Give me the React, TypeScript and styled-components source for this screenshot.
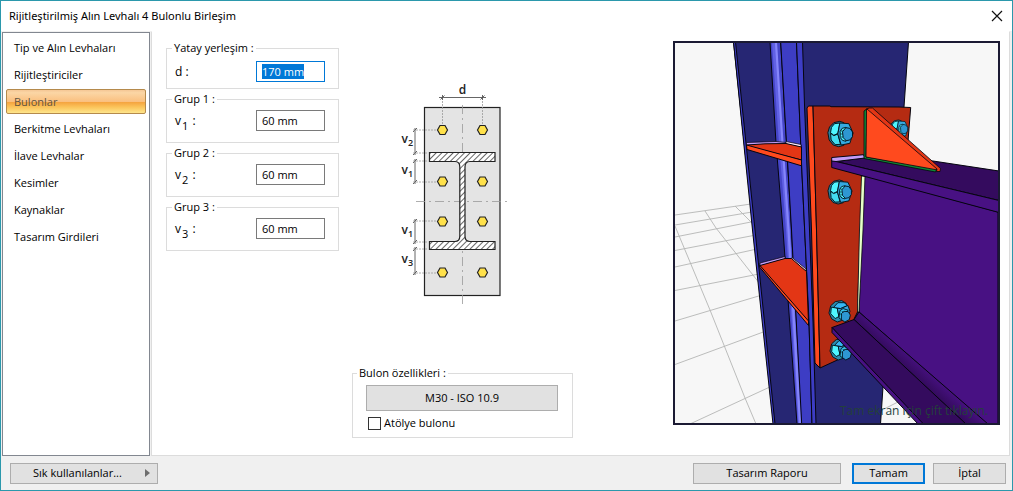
import React, { useEffect, useRef } from "react";
import styled, { createGlobalStyle } from "styled-components";

const GlobalStyle = createGlobalStyle`
  * { box-sizing: border-box; }
  body {
    margin: 0;
    background: #fff;
    color: #000;
    font: 11px/14px "Open Sans", "Noto Sans", sans-serif;
  }
  button, input { font: inherit; color: inherit; }
  ::selection { background: #0078d7; color: #fff; }
`;

const Dialog = styled.main`
  display: flex;
  flex-direction: column;
  min-height: 100vh;
  border: 1px solid #2b98ac;
  background: #fff;
`;

const TitleBar = styled.header`
  display: flex;
  align-items: center;
  justify-content: space-between;
  height: 30px;
  padding: 0 7px 0 8px;
`;

const Title = styled.h1`
  margin: 0;
  font: 400 11px/16px "Noto Sans", sans-serif;
`;

const CloseButton = styled.button`
  display: flex;
  align-items: center;
  justify-content: center;
  width: 16px;
  height: 16px;
  padding: 0;
  border: 0;
  background: none;
`;

const Body = styled.div`
  display: flex;
  flex: 1;
  padding: 0 2px 0 1px;
  background: #f0f0f0;
`;

const Sidebar = styled.nav`
  display: flex;
  flex-direction: column;
  gap: 2px;
  width: 148px;
  margin-top: 1px;
  padding: 2px 3px;
  border: 1px solid #828790;
  background: #fff;
`;

const SidebarItem = styled.button<{ $active?: boolean }>`
  height: 25px;
  padding: 0 7px;
  border: 1px solid ${(p) => (p.$active ? "#b58a4c" : "transparent")};
  border-radius: 2px;
  background: ${(p) =>
    p.$active
      ? "linear-gradient(#f5c795 0%, #fbd6a5 12%, #fac080 50%, #f5a540 54%, #fbc55c 75%, #fee58c 100%)"
      : "none"};
  color: ${(p) => (p.$active ? "#5f5340" : "#000")};
  text-align: left;
`;

const Content = styled.section`
  display: grid;
  grid-template-columns: 173px 221px 1fr;
  column-gap: 13px;
  flex: 1;
  margin-left: 1px;
  padding: 9px 9px 16px 14px;
  border: 1px solid #dcdcdc;
  border-top-color: #fff;
  background: #fff;
`;

const Groups = styled.div`
  display: flex;
  flex-direction: column;
  gap: 3px;
`;

const Group = styled.fieldset<{ $compact?: boolean }>`
  height: ${(p) => (p.$compact ? 48 : 51)}px;
  min-width: 0;
  margin: 0;
  padding: ${(p) => (p.$compact ? 6 : 4)}px 13px 0 8px;
  border: 1px solid #dcdcdc;
`;

const Legend = styled.legend<{ $flush?: boolean }>`
  height: 14px;
  margin-left: ${(p) => (p.$flush ? -9 : -3)}px;
  padding: 0 2px;
`;

const Field = styled.div`
  display: flex;
  align-items: center;
  justify-content: space-between;
  height: 21px;
`;

const FieldLabel = styled.label`
  font-size: 12px;
  line-height: 20px;
`;

const Subscript = styled.sub`
  position: relative;
  top: 2px;
  margin: 0 1px;
  font-size: 11px;
  line-height: 0;
`;

const TextInput = styled.input`
  width: 69px;
  height: 21px;
  padding: 0 5px;
  border: 1px solid #7a7a7a;
  background: #fff;
  outline: none;
  &:focus { border-color: #0078d7; }
`;

const Middle = styled.div`
  display: flex;
  flex-direction: column;
  align-items: center;
  padding-top: 39px;
`;

const Drawing = styled.svg`
  display: block;
  width: 136px;
  height: 230px;
`;

const BoltGroup = styled.fieldset`
  align-self: stretch;
  min-width: 0;
  height: 72px;
  margin: 56px 0 0;
  padding: 5px 14px 0 13px;
  border: 1px solid #dcdcdc;
`;

const Button = styled.button<{ $width?: number; $primary?: boolean }>`
  display: flex;
  align-items: center;
  justify-content: center;
  width: ${(p) => (p.$width ? `${p.$width}px` : "100%")};
  height: ${(p) => (p.$width ? 21 : 26)}px;
  padding: 0;
  border: ${(p) => (p.$primary ? "2px solid #0078d7" : "1px solid #adadad")};
  background: #e1e1e1;
`;

const CheckLabel = styled.label`
  display: flex;
  align-items: center;
  gap: 3px;
  margin-top: 5px;
  padding-left: 2px;
`;

const CheckBox = styled.input`
  appearance: none;
  width: 13px;
  height: 13px;
  margin: 0;
  border: 1px solid #333;
  background: #fff;
`;

const Preview = styled.div`
  justify-self: end;
  align-self: start;
  width: 327px;
  border: 2px solid #1b1a33;
`;

const Scene = styled.svg`
  display: block;
  width: 100%;
  height: auto;
`;

const Footer = styled.footer`
  display: flex;
  align-items: center;
  gap: 11px;
  height: 34px;
  padding: 0 6px 0 9px;
  background: #f0f0f0;
`;

const MenuButton = styled(Button)`
  justify-content: space-between;
  margin-right: auto;
  padding: 0 7px 0 22px;
`;

const Actions = styled.div`
  display: flex;
  gap: 8px;
`;

const pages = [
  "Tip ve Alın Levhaları",
  "Rijitleştiriciler",
  "Bulonlar",
  "Berkitme Levhaları",
  "İlave Levhalar",
  "Kesimler",
  "Kaynaklar",
  "Tasarım Girdileri",
];

const hex = (x: number, y: number) =>
  `${x - 5},${y} ${x - 2.5},${y - 4.5} ${x + 2.5},${y - 4.5} ${x + 5},${y} ${x + 2.5},${y + 4.5} ${x - 2.5},${y + 4.5}`;

const dimensions = [
  { sub: "2", from: 130, to: 153, text: 143 },
  { sub: "1", from: 161, to: 182, text: 174 },
  { sub: "1", from: 221, to: 242, text: 234 },
  { sub: "3", from: 249, to: 273, text: 263 },
];

function PlateDrawing() {
  return (
    <Drawing viewBox="395 80 136 230" role="img" aria-label="Bulon yerleşimi">
      <defs>
        <pattern id="hatch" width="4" height="4" patternUnits="userSpaceOnUse" patternTransform="rotate(45)">
          <rect width="4" height="4" fill="#fff" />
          <path d="M0 0V4" stroke="#333" strokeWidth="1.5" />
        </pattern>
      </defs>
      <rect x="424.5" y="107.5" width="75.5" height="188" fill="#e4e4e4" stroke="#222" strokeWidth="1.2" />
      <path d="M462.5 105V306M416 201.5H510" stroke="#999" strokeWidth=".8" strokeDasharray="9 4 2 4" />
      <path
        d="M429.5 152.5H495V161.5H470Q465 161.5 465 167V236Q465 241.5 470 241.5H495V249.5H429.5V241.5H455Q459.8 241.5 459.8 236V167Q459.8 161.5 455 161.5H429.5Z"
        fill="url(#hatch)"
        stroke="#222"
        strokeWidth="1.2"
      />
      <path d="M439 97.5H486M442.5 95V100M482.5 95V100M440.5 99.5L444.5 95.5M480.5 99.5L484.5 95.5" stroke="#555" strokeWidth=".9" />
      <path d="M442.5 101V126M482.5 101V126" stroke="#999" strokeWidth=".8" strokeDasharray="2 1" />
      {dimensions.map((d) => (
        <g key={d.from}>
          <path
            d={`M415 ${d.from - 2}V${d.to + 2}M413 ${d.from + 2}L417 ${d.from - 2}M413 ${d.to + 2}L417 ${d.to - 2}`}
            stroke="#555"
            strokeWidth=".9"
          />
          <path
            d={`M413 ${d.from}H${d.from === 130 || d.from === 221 ? 437 : 428}M413 ${d.to}H${d.to === 182 || d.to === 273 ? 437 : 428}`}
            stroke="#999"
            strokeWidth=".8"
            strokeDasharray="2 1"
          />
          <text x="401.5" y={d.text} fontSize="12" fontWeight="600" fill="#222">
            v<tspan dy="3" fontSize="9">{d.sub}</tspan>
          </text>
        </g>
      ))}
      <text x="462.5" y="94" fontSize="12" fontWeight="600" textAnchor="middle" fill="#222">d</text>
      {[130, 181.5, 221.5, 272.5].map((y) =>
        [442.5, 482.5].map((x) => (
          <polygon key={`${x}-${y}`} points={hex(x, y)} fill="#ffe14a" stroke="#222" strokeWidth="1.2" />
        ))
      )}
    </Drawing>
  );
}

/* Bolt seen from the side of the plate; local units are a third of a scene unit. */
function UpperBolt({ x, y, scale = 1 }: { x: number; y: number; scale?: number }) {
  return (
    <g transform={`translate(${x} ${y}) scale(${scale / 3})`} stroke="#001018" strokeWidth="2.8" strokeLinejoin="round">
      <path d="M-20-34L-2-38L10-34V34L-6 38L-22 33L-34 18L-38-4L-33-21Z" fill="#2b7f9c" />
      <path d="M-18-31L-2-33L-8-2L-20 4L-30-4L-27-20Z" fill="#4ff6ff" />
      <path d="M-30-2L-20 5L-8 0L0 31L-16 32L-28 18Z" fill="#42dcf0" />
      <path d="M-2-33L25-31L38-3L28 28L2 33L-8 0Z" fill="#35a9e0" />
      <path d="M5-17L16-20V22L6 19L-1 10V-8Z" fill="#4ff6ff" />
      <path d="M1-9H11M-1 0H9M1 9H11" strokeWidth="2" />
      <path d="M16-19L28-17L36-6V8L28 18L17 20L8 11L6-7Z" fill="#2e97d2" />
    </g>
  );
}

function LowerBolt({ x, y }: { x: number; y: number }) {
  return (
    <g transform={`translate(${x} ${y}) scale(.345)`} stroke="#001018" strokeWidth="2.6" strokeLinejoin="round">
      <path d="M-27-18L-14-30L5-33L18-25L4 25L-8 29L-24 20L-32 3Z" fill="#2b8cad" />
      <path d="M-20-12L-6-27L12-27L22-19L2-10Z" fill="#36b8f5" />
      <path d="M-25-14L-8-11L-3 13L-14 19L-27 5Z" fill="#4ff6ff" />
      <path d="M-8-11L2-10L23-19L29-2L15 17L-3 14Z" fill="#36a8df" />
      <path d="M0-4L9-10L24-5L10 8L6 24L-3 17Z" fill="#3ac5ee" />
      <path d="M4 5L11-2L24-1L30 9L27 22L14 29L4 22Z" fill="#2e97d2" />
      <path d="M0 4L5 9M5-3L10 2" strokeWidth="2" />
    </g>
  );
}

function ConnectionScene() {
  return (
    <Scene viewBox="675 43 323 380" role="img" aria-label="Birleşimin üç boyutlu görünümü" stroke="#05050f" strokeWidth="1" strokeLinejoin="round">
      <defs>
        <linearGradient id="beamRound" gradientUnits="userSpaceOnUse" x1="908" y1="370" x2="918" y2="359">
          <stop offset="0" stopColor="#340b5e" />
          <stop offset="1" stopColor="#481183" />
        </linearGradient>
      </defs>
      <rect x="670" y="38" width="334" height="392" fill="#f7f7f7" stroke="none" />
      <path
        d="M675 215L751 204M675 225L752 212M675 237L756 221M675 250.5L756 235M675 267L757 249M675 290.5L759 274M675 321L762 295M675 364.5L766 331M691 423.5L772 386M675 226L710 310L745 398L756 424M705 211L716 228L760 284M735 206L756 227M884 409L900 401"
        stroke="#b4b6b4"
        strokeWidth=".9"
        fill="none"
      />

      {/* column */}
      <path d="M733.5 42H908.5L904 107L883 387L880.5 424H774Z" fill="#262673" />
      <path d="M733.5 42H735.5L755 230L775 424H773L752.5 230Z" fill="#3d3dc4" />
      <path d="M770 42L776 143L783 230L797 424H802L791.5 230L780.7 42Z" fill="#4545c8" />
      <path d="M774 43L781 143L788 230L800 423" fill="none" stroke="#6161e4" strokeWidth="4" />
      <path d="M776 43L782.5 143L788.5 230L800 423" fill="none" stroke="#8585fb" strokeWidth="2.2" />
      <path d="M780.7 42L786.5 143L791.5 230L801.7 424H812L809 322L801.5 163L796.5 42Z" fill="#3d3dc4" />
      <path d="M796.5 42H802.5L804.5 105L809.5 230L813 322L816 424H812L809 322L801.5 163Z" fill="#3d3dc4" />

      {/* column stiffeners */}
      <path d="M746.5 142.5L776 141.500L786 142.500L801 145V148L786 145L746.5 145.5Z" fill="#c39cf7" strokeWidth=".7" />
      <path d="M786 141.5L801 144.5V147.5L786 144Z" fill="#fde9ff" strokeWidth=".7" />
      <path d="M746.5 145L765 143.8L786 143.5L801.5 147V160L746.5 146Z" fill="#e33615" />
      <path d="M746.5 145L801.5 160V165.800L747 149.5Z" fill="#ff4a1e" />
      <path d="M760 263L785 256.5V259L760 266Z" fill="#c39cf7" strokeWidth=".7" />
      <path d="M792 257.5L806 269V272L791.5 259.5Z" fill="#fde9ff" strokeWidth=".7" />
      <path d="M760 265.5L785 258.5H791.5L806.5 271.500L808.5 322.5L760 266.5Z" fill="#e33615" />
      <path d="M760 265.5L808.5 321V325.5L760 267.5Z" fill="#ff4a1e" />

      {/* end plate */}
      <path d="M807 108L808.5 106H813L816.5 230L820 368L815 363L811.5 230Z" fill="#ff4a1e" />
      <path d="M813 106H830L831 106.7L899 107L910.7 107.5L908 141L862 177L857.5 312L854 319L851.5 353.5L820 368L816.5 230Z" fill="#b52b12" />
      <UpperBolt x={899} y={129} scale={0.72} />
      <UpperBolt x={840.5} y={134} />
      <UpperBolt x={840} y={192} scale={0.95} />
      <LowerBolt x={840} y={312} />
      <LowerBolt x={841} y={350} />

      {/* beam */}
      <path d="M863 175L998 212V424H987L859 312Z" fill="#481183" />
      <path d="M861.500 176H865L863 230L859 312H857.5L859.5 230Z" fill="#e6ffc8" strokeWidth=".8" />
      <path d="M836 161.5L863 158L933 161L999 171V200.5Z" fill="#340b5e" />
      <path d="M831.7 160.5L836 161.5L999 200.5V212.5L831.7 167.5Z" fill="#481183" />
      <path d="M831.7 157.5L863.5 154.7L865 158L836 161.5L831.7 161Z" fill="#c39cf7" />
      <path d="M854 319.5L859 312L988 424H965.5Z" fill="url(#beamRound)" />
      <path d="M832 327.5L854 319.5L966 424H922.5Z" fill="#340b5e" />
      <path d="M832 327.5L923.5 424H918L832 332.5Z" fill="#481183" />

      {/* beam gusset */}
      <path d="M864 111L867 108.7L866 157L937 168.5L935.5 172L864 158.5Z" fill="#0f8a35" strokeWidth=".8" />
      <path d="M866.5 109L870 108.5L937.5 168.7L936 169.7L866 157Z" fill="#ff4a1e" strokeWidth=".8" />
      <path d="M867 109L869 108H872.5L940.5 168.5L940 171.5H936.5L937 169Z" fill="#e33615" strokeWidth=".8" />
      <text x="840" y="415" fontSize="12" fill="#24403c" stroke="none">Tam ekran için çift tıklayın.</text>
    </Scene>
  );
}

export default function App() {
  const distance = useRef<HTMLInputElement>(null);
  useEffect(() => {
    distance.current?.focus();
    distance.current?.select();
  }, []);

  return (
    <>
      <GlobalStyle />
      <Dialog>
        <TitleBar>
          <Title>Rijitleştirilmiş Alın Levhalı 4 Bulonlu Birleşim</Title>
          <CloseButton aria-label="Kapat">
            <svg width="12" height="12" viewBox="0 0 12 12" stroke="#111" strokeWidth="1.2">
              <path d="M1 1L11 11M11 1L1 11" />
            </svg>
          </CloseButton>
        </TitleBar>
        <Body>
          <Sidebar>
            {pages.map((page) => (
              <SidebarItem key={page} $active={page === "Bulonlar"}>{page}</SidebarItem>
            ))}
          </Sidebar>
          <Content>
            <Groups>
              <Group $compact>
                <Legend>Yatay yerleşim :</Legend>
                <Field>
                  <FieldLabel htmlFor="d">d :</FieldLabel>
                  <TextInput id="d" ref={distance} defaultValue="170 mm" />
                </Field>
              </Group>
              {["1", "2", "3"].map((n) => (
                <Group key={n}>
                  <Legend>Grup {n} :</Legend>
                  <Field>
                    <FieldLabel htmlFor={`v${n}`}>v<Subscript>{n}</Subscript> :</FieldLabel>
                    <TextInput id={`v${n}`} defaultValue="60 mm" />
                  </Field>
                </Group>
              ))}
            </Groups>
            <Middle>
              <PlateDrawing />
              <BoltGroup>
                <Legend $flush>Bulon özellikleri :</Legend>
                <Button>M30 - ISO 10.9</Button>
                <CheckLabel>
                  <CheckBox type="checkbox" />
                  Atölye bulonu
                </CheckLabel>
              </BoltGroup>
            </Middle>
            <Preview>
              <ConnectionScene />
            </Preview>
          </Content>
        </Body>
        <Footer>
          <MenuButton $width={148}>
            Sık kullanılanlar...
            <svg width="5" height="8" viewBox="0 0 5 8" fill="#6d6d6d"><path d="M0 0L5 4L0 8Z" /></svg>
          </MenuButton>
          <Button $width={148}>Tasarım Raporu</Button>
          <Actions>
            <Button $width={73} $primary>Tamam</Button>
            <Button $width={73}>İptal</Button>
          </Actions>
        </Footer>
      </Dialog>
    </>
  );
}
